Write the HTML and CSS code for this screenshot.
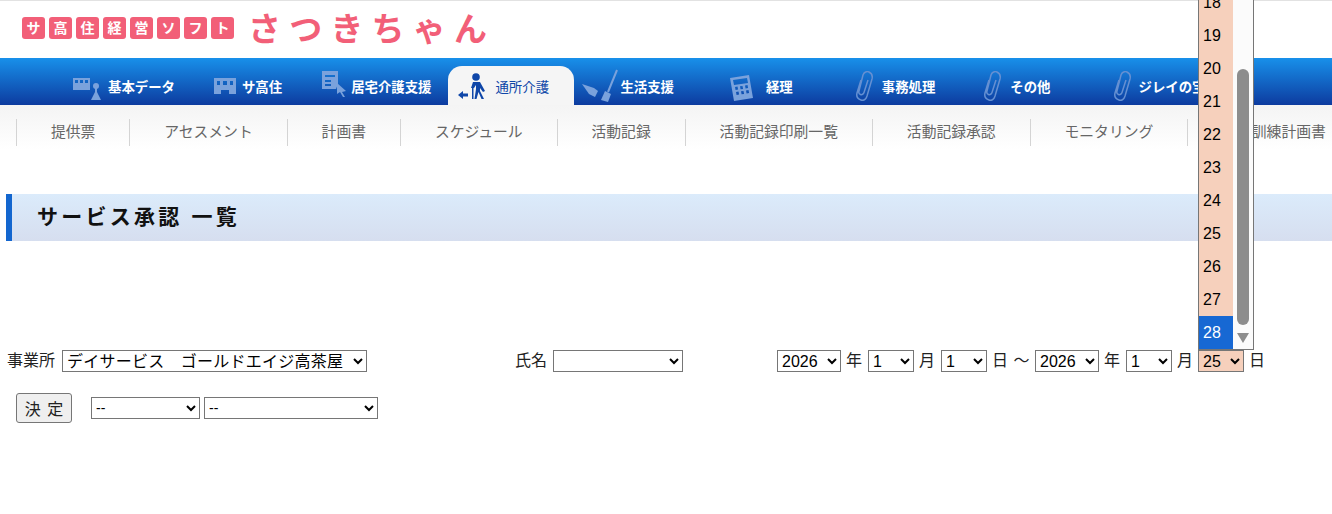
FILE: index.html
```html
<!DOCTYPE html>
<html lang="ja">
<head>
  <meta charset="UTF-8">
  <title>サービス承認 一覧</title>
  <link rel="stylesheet" href="styles.css">
</head>
<body>
  <header class="logo">
    <div class="logo-tiles">
      <span>サ</span><span>高</span><span>住</span><span>経</span><span>営</span><span>ソ</span><span>フ</span><span>ト</span>
    </div>
    <div class="logo-name">さつきちゃん</div>
  </header>

  <nav class="nav">
    <a class="nav-item nav-kihon" href="#">
      <svg width="28" height="24" viewBox="0 0 28 24"><path fill-rule="evenodd" d="M0 2h17v12H0zM2 4v3h3V4zM7 4v3h3V4zM12 4v3h3V4z"/><circle cx="23" cy="10" r="3"/><path d="M22 12h2v4l4 8h-10l4-8z"/></svg>
      <span>基本データ</span>
    </a>
    <a class="nav-item nav-sakoju" href="#">
      <svg width="22" height="16" viewBox="0 0 22 16"><path fill-rule="evenodd" d="M0 0h22v16h-7v-4H7v4H0zM3 3v4h3V3zM9 3v4h4V3zM16 3v4h3V3z"/></svg>
      <span>サ高住</span>
    </a>
    <a class="nav-item nav-kyotaku" href="#">
      <svg width="24" height="26" viewBox="0 0 24 26"><path fill-rule="evenodd" d="M0 0h16v13l-2 5H0zM3 4v2h10V4zM3 9v2h6V9zM3 13v2h6v-2z"/><path d="M15 12l9 8-4 1 3 5-2 0-3-5-3 2z"/></svg>
      <span>居宅介護支援</span>
    </a>
    <a class="nav-item nav-tsusho is-active" href="#">
      <svg width="28" height="30" viewBox="0 0 28 30"><circle cx="18" cy="6" r="3.800"/><path d="M15 11h7l5 9-2 1-3-4v3l4 8h-2.500l-3-7-2 7h-2l1.500-10v-4l-2 3h-3z"/><path d="M14 17h1.500v11H14zM0 24l5-4v2.500h5v3H5V28z"/></svg>
      <span>通所介護</span>
    </a>
    <a class="nav-item nav-seikatsu" href="#">
      <svg width="36" height="34" viewBox="0 0 36 34"><path d="M0 15l12 4 4 3-3 6-6-3z"/><path class="stroke" d="M35 1L26 23"/><path d="M23 22l6 3-3 8-7-2z"/></svg>
      <span>生活支援</span>
    </a>
    <a class="nav-item nav-keiri" href="#">
      <svg width="23" height="26" viewBox="0 0 23 26"><path fill-rule="evenodd" d="M0 3L19 0l4 23-19 3zM3 5l1 5 14-2-1-5zM5 12l.6 3 2.500-.4-.6-3zM10 11.300l.6 3 2.500-.4-.6-3zM15 10.500l.6 3 2.500-.4-.6-3zM6 17l.6 3 2.500-.4-.6-3zM11 16.300l.6 3 2.500-.4-.6-3zM16 15.500l.6 3 2.500-.4-.6-3z"/></svg>
      <span>経理</span>
    </a>
    <a class="nav-item nav-jimu" href="#">
      <svg class="clip" width="18" height="30" viewBox="0 0 18 30"><path d="M6 9L2 22c-1 4 1 6 4 7s5-1 6-4l5-17c1-4-1-6-3-7s-5 0-6 3L4 20c-.6 2 0 3 1.500 3.500s3-.5 3.500-2L13 9"/></svg>
      <span>事務処理</span>
    </a>
    <a class="nav-item nav-sonota" href="#">
      <svg class="clip" width="18" height="30" viewBox="0 0 18 30"><path d="M6 9L2 22c-1 4 1 6 4 7s5-1 6-4l5-17c1-4-1-6-3-7s-5 0-6 3L4 20c-.6 2 0 3 1.500 3.500s3-.5 3.500-2L13 9"/></svg>
      <span>その他</span>
    </a>
    <a class="nav-item nav-jirei" href="#">
      <svg class="clip" width="18" height="30" viewBox="0 0 18 30"><path d="M6 9L2 22c-1 4 1 6 4 7s5-1 6-4l5-17c1-4-1-6-3-7s-5 0-6 3L4 20c-.6 2 0 3 1.500 3.500s3-.5 3.500-2L13 9"/></svg>
      <span>ジレイの宝箱</span>
    </a>
  </nav>

  <ul class="subnav">
    <li>提供票</li>
    <li>アセスメント</li>
    <li>計画書</li>
    <li>スケジュール</li>
    <li>活動記録</li>
    <li>活動記録印刷一覧</li>
    <li>活動記録承認</li>
    <li>モニタリング</li>
    <li>機能訓練計画書</li>
  </ul>

  <h1 class="page-title">サービス承認 一覧</h1>

  <form class="filter">
    <div class="filter-row">
      <div class="group group-office">
        <label>事業所</label>
        <select class="sel-office"><option>デイサービス　ゴールドエイジ高茶屋</option></select>
      </div>
      <div class="group group-name">
        <label>氏名</label>
        <select class="sel-name"><option></option></select>
      </div>
      <div class="group group-date">
        <select class="sel-year"><option>2026</option></select>
        <span>年</span>
        <select class="sel-small"><option>1</option></select>
        <span>月</span>
        <select class="sel-small"><option>1</option></select>
        <span class="date-sep">日 〜</span>
        <select class="sel-year"><option>2026</option></select>
        <span>年</span>
        <select class="sel-small"><option>1</option></select>
        <span>月</span>
        <div class="open-select">
          <select class="sel-small sel-open"><option>25</option></select>
          <div class="dropdown">
            <ul class="dropdown-list">
              <li>18</li>
              <li>19</li>
              <li>20</li>
              <li>21</li>
              <li>22</li>
              <li>23</li>
              <li>24</li>
              <li>25</li>
              <li>26</li>
              <li>27</li>
              <li class="is-selected">28</li>
            </ul>
            <div class="scrollbar">
              <div class="scrollbar-thumb"></div>
              <div class="scrollbar-arrow"></div>
            </div>
          </div>
        </div>
        <span>日</span>
      </div>
    </div>

    <div class="action-row">
      <button type="button">決 定</button>
      <select class="sel-a"><option>--</option></select>
      <select class="sel-b"><option>--</option></select>
    </div>
  </form>
</body>
</html>
```

FILE: styles.css
```css
* {
  margin: 0;
  padding: 0;
  box-sizing: border-box;
}
html, body {
  overflow: hidden;
}
body {
  font-family: "Liberation Sans", "Noto Sans CJK JP", sans-serif;
  font-size: 16px;
  color: #222;
  background-color: #fff;
}
ul {
  list-style: none;
}

/* logo */
.logo {
  height: 58px;
  border-top: 1px solid #e2e2e2;
  display: flex;
  align-items: flex-start;
  padding-left: 22px;
}
.logo-tiles {
  display: flex;
  gap: 4px;
  margin-top: 16px;
}
.logo-tiles span {
  width: 23px;
  height: 22px;
  border-radius: 3px;
  background-color: #f25f78;
  color: #fff;
  font-size: 14px;
  font-weight: bold;
  line-height: 22px;
  text-align: center;
}
.logo-name {
  margin: 6px 0 0 14px;
  color: #f25f78;
  font-family: "Noto Sans CJK JP", sans-serif;
  font-size: 33px;
  font-weight: bold;
  letter-spacing: 8.200px;
  line-height: 40px;
}

/* main nav */
.nav {
  height: 47px;
  display: flex;
  align-items: flex-end;
  padding-left: 73px;
  background: linear-gradient(#1890ea, #0d3b9f);
}
.nav-item {
  height: 39px;
  display: flex;
  align-items: center;
  color: #fff;
  font-size: 13.400px;
  font-weight: bold;
  text-decoration: none;
  white-space: nowrap;
}
.nav-item svg {
  flex: none;
  fill: #7aa2dc;
}
.nav-item .stroke {
  fill: none;
  stroke: #7aa2dc;
  stroke-width: 2;
}
.nav-item .clip {
  fill: none;
  stroke: #6590d2;
  stroke-width: 1.500;
}
.nav-kihon { gap: 7px; }
.nav-kihon svg { margin-top: 5px; }
.nav-sakoju { gap: 6px; margin-left: 39px; }
.nav-sakoju svg { margin-top: 1px; }
.nav-kyotaku { gap: 5px; margin-left: 40px; }
.nav-kyotaku svg { margin-top: -3px; }
.nav-tsusho { gap: 9px; margin-left: 17px; padding: 0 25.400px 0 10px; }
.nav-seikatsu { gap: 2px; margin-left: 8px; }
.nav-keiri { gap: 13px; margin-left: 56px; }
.nav-keiri svg { margin-top: 4px; }
.nav-jimu { gap: 9px; margin-left: 62px; }
.nav-sonota { gap: 9px; margin-left: 48px; }
.nav-jirei { gap: 8px; margin-left: 62px; }
.nav-item.is-active {
  background-color: #f5f5f5;
  border-radius: 14px 14px 0 0;
  color: #0f46a8;
  font-weight: normal;
}
.nav-item.is-active svg {
  fill: #0f46a8;
}

/* sub nav */
.subnav {
  height: 45px;
  display: flex;
  align-items: flex-start;
  padding: 14px 0 0 16px;
  background: linear-gradient(#f4f4f4, #fff);
  color: #666;
  font-size: 14.800px;
  overflow: hidden;
}
.subnav li {
  flex: none;
  height: 27px;
  line-height: 26px;
  padding: 0 33.950px;
  border-left: 1px solid #d4d4d4;
  white-space: nowrap;
}

/* title */
.page-title {
  margin: 44px 0 0 6px;
  height: 47px;
  padding-left: 25px;
  border-left: 6px solid #1366cf;
  background: linear-gradient(#dbebfb, #d6deef);
  color: #111;
  font-size: 21px;
  line-height: 46px;
  letter-spacing: 3.250px;
}

/* filter form */
.filter {
  padding-left: 7px;
}
.filter-row {
  margin-top: 109px;
  display: flex;
  align-items: center;
  height: 22px;
}
.group {
  display: flex;
  align-items: center;
}
.group label,
.group span {
  margin-bottom: 4px;
}
.group-office label {
  margin-right: 7px;
}
.group-name {
  margin-left: 148px;
}
.group-name label {
  margin-right: 6px;
}
.group-date {
  margin-left: 94px;
}
.group-date span {
  margin-left: 5px;
  margin-right: 6px;
}
.group-date .date-sep {
  width: 37px;
  white-space: nowrap;
  word-spacing: 1px;
}
select {
  height: 22px;
  font-family: inherit;
  font-size: 16px;
  color: #000;
  background-color: #fff;
  border: 1px solid #767676;
}
.sel-office { width: 305px; letter-spacing: .25px; }
.sel-name { width: 130px; }
.sel-year { width: 64px; }
.sel-small { width: 46px; }
.sel-open {
  display: block;
  background-color: #f6d0bc;
}
.open-select {
  position: relative;
  margin-left: -1px;
}

/* opened list of the day select */
.dropdown {
  position: absolute;
  left: 0;
  bottom: 100%;
  width: 56px;
  display: flex;
  border: 1px solid #767676;
  background-color: #fbfbfb;
}
.dropdown-list {
  width: 34px;
  background-color: #f6d0bc;
  color: #000;
}
.dropdown-list li {
  height: 33px;
  line-height: 33px;
  padding-left: 4px;
}
.dropdown-list li.is-selected {
  background-color: #1768d3;
  color: #fff;
}
.scrollbar {
  flex: 1;
  display: flex;
  flex-direction: column;
  align-items: center;
  justify-content: flex-end;
  padding-bottom: 6px;
}
.scrollbar-thumb {
  width: 12px;
  height: 256px;
  border-radius: 6px;
  background-color: #8d8d8d;
  margin-bottom: 8px;
}
.scrollbar-arrow {
  width: 0;
  height: 0;
  border-left: 6px solid transparent;
  border-right: 6px solid transparent;
  border-top: 10px solid #8d8d8d;
}

/* action row */
.action-row {
  margin-top: 21px;
  margin-left: 9px;
  display: flex;
  align-items: center;
}
button {
  width: 56px;
  height: 30px;
  font-family: inherit;
  font-size: 16px;
  word-spacing: 2px;
  color: #222;
  background-color: #efefef;
  border: 1px solid #767676;
  border-radius: 3px;
}
.action-row select {
  font-size: 14px;
}
.sel-a {
  width: 109px;
  margin-left: 19px;
}
.sel-b {
  width: 174px;
  margin-left: 4px;
}
```
